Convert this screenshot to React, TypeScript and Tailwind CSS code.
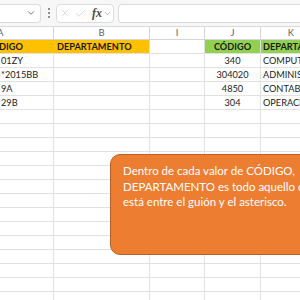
import {ChevronDown, X, Check} from "lucide-react";

const cols = ["w-[54px]", "w-[96px]", "w-[55px]", "w-[56px]", "w-[60px]"];

const rows: string[][] = [
    ["01ZY", "", "", "340", "COMPUTACIÓN"],
    ["*2015BB", "", "", "304020", "ADMINISTRACIÓN"],
    ["9A", "", "", "4850", "CONTABILIDAD"],
    ["29B", "", "", "304", "OPERACIONES"],
];

const Cell = ({w, children, className = ""}: {w: string; children?: React.ReactNode; className?: string}) => (
    <div className={`${w} shrink-0 h-full border-r border-[#e1e1e1] overflow-hidden whitespace-nowrap flex items-center ${className}`}>
        {children}
    </div>
);

const App = () => {
    const emptyRows = Array.from({length: 14});

    return (
        <div className="w-[300px] h-[300px] overflow-hidden relative bg-white font-['Lato',sans-serif] text-[9.2px] text-[#1a1a1a]">
            {/* barra de fórmulas */}
            <div className="h-[27px] flex items-center bg-[#f7f7f7] border-b border-[#d9d9d9]">
                <div className="w-[41px] h-[19px] shrink-0 bg-white border border-l-0 border-[#dcdcdc] rounded-r-[4px] flex items-center justify-end pr-[4px]">
                    <ChevronDown size={10} strokeWidth={2} className="text-[#5a5a5a]"/>
                </div>
                <div className="w-[15px] shrink-0 flex flex-col items-center gap-[2px]">
                    <span className="w-[2px] h-[2px] bg-[#6b6b6b] rounded-full"/>
                    <span className="w-[2px] h-[2px] bg-[#6b6b6b] rounded-full"/>
                    <span className="w-[2px] h-[2px] bg-[#6b6b6b] rounded-full"/>
                </div>
                <div className="w-[58px] h-[19px] shrink-0 bg-white border border-[#dcdcdc] rounded-[4px] flex items-center pl-[2px]">
                    <X size={12} strokeWidth={1.2} className="text-[#c4c4c4]"/>
                    <Check size={13} strokeWidth={1.2} className="text-[#c4c4c4] ml-[3px]"/>
                    <span className="ml-[5px] font-['Liberation_Serif',serif] italic font-bold text-[12px] text-[#4a4a4a] leading-none">fx</span>
                    <ChevronDown size={9} strokeWidth={1.5} className="text-[#8a8a8a] ml-[1px]"/>
                </div>
                <div className="ml-[4px] flex-1 h-[19px] bg-white border border-r-0 border-[#dcdcdc] rounded-l-[4px]"/>
            </div>

            {/* encabezados de columna */}
            <div className="h-[13px] flex border-b border-[#d4d4d4] text-[#5f5f5f] text-[9.5px]">
                <div className={`${cols[0]} shrink-0 border-r border-[#d4d4d4] flex items-center`}><span className="ml-[-3px]">A</span></div>
                <div className={`${cols[1]} shrink-0 border-r border-[#d4d4d4] flex items-center justify-center`}>B</div>
                <div className={`${cols[2]} shrink-0 border-r border-[#d4d4d4] flex items-center justify-center`}>I</div>
                <div className={`${cols[3]} shrink-0 border-r border-[#d4d4d4] flex items-center justify-center`}>J</div>
                <div className={`${cols[4]} shrink-0 flex items-center justify-center`}>K</div>
            </div>

            {/* fila de títulos */}
            <div className="h-[14px] flex border-b border-[#e1e1e1] font-bold">
                <Cell w={cols[0]} className="bg-[#ffc000] border-[#ffc000]"><span className="ml-[-1px]">DIGO</span></Cell>
                <Cell w={cols[1]} className="bg-[#ffc000] pl-[3px]">DEPARTAMENTO</Cell>
                <Cell w={cols[2]}/>
                <Cell w={cols[3]} className="bg-[#92d050] border-[#92d050] justify-center">CÓDIGO</Cell>
                <Cell w={cols[4]} className="bg-[#92d050] pl-[2px]">DEPARTAMENTO</Cell>
            </div>

            {rows.map((r, i) => (
                <div key={i} className="h-[14px] flex border-b border-[#e1e1e1]">
                    <Cell w={cols[0]} className="pl-[1px]">{r[0]}</Cell>
                    <Cell w={cols[1]}/>
                    <Cell w={cols[2]}/>
                    <Cell w={cols[3]} className="justify-center">{r[3]}</Cell>
                    <Cell w={cols[4]} className="pl-[2px]">{r[4]}</Cell>
                </div>
            ))}

            {emptyRows.map((_, i) => (
                <div key={i} className="h-[14px] flex border-b border-[#e1e1e1]">
                    <Cell w={cols[0]}/>
                    <Cell w={cols[1]}/>
                    <Cell w={cols[2]}/>
                    <Cell w={cols[3]}/>
                    <Cell w={cols[4]}/>
                </div>
            ))}

            {/* cuadro de texto */}
            <div className="absolute left-[110px] top-[154px] w-[230px] h-[101px] bg-[#ed7d31] border border-[#b5622a] rounded-[10px] pl-[12px] pt-[8px] text-white text-[11.5px] leading-[15.5px] whitespace-nowrap">
                <div>Dentro de cada valor de CÓDIGO,</div>
                <div>DEPARTAMENTO es todo aquello que</div>
                <div>está entre el guión y el asterisco.</div>
            </div>
        </div>
    );
};

export default App;
